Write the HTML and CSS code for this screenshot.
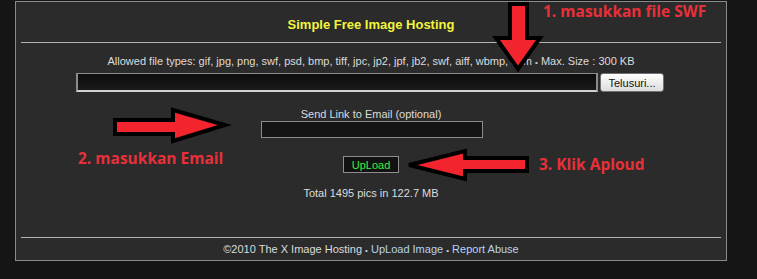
FILE: index.html
```html
<!DOCTYPE html>
<html lang="en">
<head>
  <meta charset="UTF-8">
  <meta name="viewport" content="width=device-width, initial-scale=1.0">
  <title>Simple Free Image Hosting</title>
  <link rel="stylesheet" href="styles.css">
</head>
<body>

  <div class="panel">
    <div class="title">Simple Free Image Hosting</div>
    <div class="rule"></div>

    <div class="content">
      <div class="allowed">Allowed file types: gif, jpg, png, swf, psd, bmp, tiff, jpc, jp2, jpf, jb2, swf, aiff, wbmp, com <span class="dot">&bull;</span> Max. Size : 300 KB</div>

      <div class="file-row">
        <input type="text" class="file-path">
        <button class="browse-btn">Telusuri...</button>
      </div>

      <div class="label">Send Link to Email (optional)</div>
      <input type="text" class="email-input">

      <div class="upload-row">
        <button class="upload-btn">UpLoad</button>
      </div>

      <div class="total">Total 1495 pics in 122.7 MB</div>
    </div>

    <div class="rule"></div>
    <div class="footer">
      &copy;2010 The X Image Hosting <span class="dot">&bull;</span> <a href="#">UpLoad Image</a> <span class="dot">&bull;</span> <a href="#">Report Abuse</a>
    </div>
  </div>

  <!-- red tutorial arrows drawn over the page -->
  <svg class="notes" width="757" height="279" viewBox="0 0 757 279">
    <g class="arrow">
      <polygon points="510,4 527,4 527,38 540,38 518,69 496,38 510,38"/>
      <polygon points="115,120 173,120 173,110 225,125 173,141 173,134 115,134"/>
      <polygon points="409,165 465,151 465,158 527,158 527,171 465,171 465,179"/>
    </g>
    <text class="note" x="543" y="17">1. masukkan file SWF</text>
    <text class="note" x="78" y="164">2. masukkan Email</text>
    <text class="note" x="539" y="170">3. Klik Aploud</text>
  </svg>

</body>
</html>
```

FILE: styles.css
```css
body {
  margin: 0;
  padding: 0;
  background-color: #151515;
  font-family: "Liberation Sans", Arial, sans-serif;
  font-size: 11px;
  color: #dcdcdc;
  width: 757px;
  height: 279px;
  overflow: hidden;
}
.panel {
  margin: 1px 0 0 15px;
  width: 710px;
  border: 1px solid #8a8a8a;
  background-color: #2b2b2b;
}
.title {
  height: 40px;
  line-height: 45px;
  text-align: center;
  font-size: 13px;
  font-weight: bold;
  color: #f4f43c;
}
.rule {
  height: 1px;
  margin: 0 5px;
  background-color: #b4b4b4;
}
.content {
  height: 194px;
  display: flex;
  flex-direction: column;
  align-items: center;
}
.allowed {
  margin-top: 11px;
  line-height: 14px;
}
.dot {
  font-size: 8px;
  color: #cfcfcf;
}
.file-row {
  margin-top: 3px;
  display: flex;
  gap: 2px;
  margin-left: -2px;
}
.file-path {
  box-sizing: border-box;
  width: 522px;
  height: 19px;
  margin: 0;
  padding: 0 3px;
  border: 2px solid #8c8c8c;
  border-top-width: 1px;
  border-bottom-color: #d2d2d2;
  background: linear-gradient(#0c0c0c, #1a1a1a);
  color: #ddd;
}
.browse-btn {
  box-sizing: border-box;
  width: 64px;
  height: 19px;
  margin: 0;
  padding: 0;
  border: 1px solid #707070;
  border-radius: 3px;
  background: linear-gradient(#ffffff, #ededed 50%, #dddddd);
  font-family: "Liberation Sans", Arial, sans-serif;
  font-size: 11px;
  color: #111;
}
.label {
  margin-top: 15px;
  line-height: 14px;
}
.email-input {
  box-sizing: border-box;
  width: 222px;
  height: 17px;
  margin: 0 0 0 1px;
  padding: 0 3px;
  border: 1px solid #8c8c8c;
  background-color: #151515;
  color: #ddd;
}
.upload-row {
  margin-top: 18px;
}
.upload-btn {
  box-sizing: border-box;
  width: 56px;
  height: 17px;
  margin: 0;
  padding: 0;
  border: 1px solid #8e8e8e;
  background-color: #121212;
  font-family: "Liberation Sans", Arial, sans-serif;
  font-size: 11px;
  color: #3cf03c;
}
.total {
  margin-top: 13px;
  line-height: 14px;
}
.footer {
  height: 22px;
  line-height: 23px;
  text-align: center;
}
.footer a {
  color: #b7d3f2;
  text-decoration: none;
}
.notes {
  position: absolute;
  top: 0;
  left: 0;
}
.arrow polygon {
  fill: #f2242e;
  stroke: #000;
  stroke-width: 4;
  stroke-linejoin: miter;
}
.note {
  font-family: "Open Sans", sans-serif;
  font-weight: bold;
  font-size: 15.5px;
  fill: #e8303a;
}
```
